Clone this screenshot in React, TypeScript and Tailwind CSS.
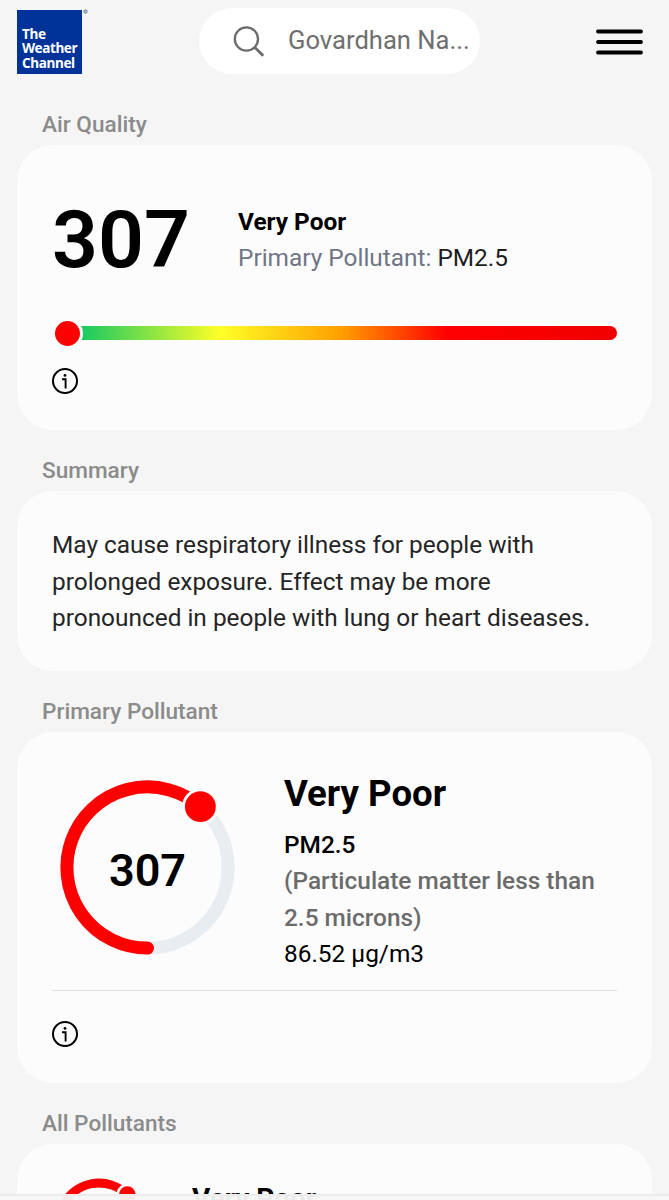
import type { ReactNode } from 'react';

interface GaugeProps {
  size: number;
  stroke: number;
  radius: number;
  dot: number;
  gap: number;
  angle: number;
}

const polar = (center: number, radius: number, angle: number) => {
  const rad = (angle * Math.PI) / 180;
  return { x: center + radius * Math.sin(rad), y: center - radius * Math.cos(rad) };
};

function Gauge({ size, stroke, radius, dot, gap, angle }: GaugeProps) {
  const c = size / 2;
  const end = polar(c, radius, angle);

  return (
    <svg width={size} height={size} viewBox={`0 0 ${size} ${size}`} className="block overflow-visible">
      <circle cx={c} cy={c} r={radius} fill="none" stroke="#e7edf1" strokeWidth={stroke} />
      <path
        d={`M${c} ${c + radius} A${radius} ${radius} 0 1 1 ${end.x} ${end.y}`}
        fill="none"
        stroke="#ff0000"
        strokeWidth={stroke}
        strokeLinecap="round"
      />
      <circle cx={end.x} cy={end.y} r={dot + gap} fill="#fcfcfc" />
      <circle cx={end.x} cy={end.y} r={dot} fill="#ff0000" />
    </svg>
  );
}

function InfoIcon() {
  return (
    <svg width="26" height="26" viewBox="0 0 26 26" fill="none" className="block">
      <circle cx="13" cy="13" r="12" stroke="#000" strokeWidth="2" />
      <circle cx="13" cy="7.4" r="1.4" fill="#000" />
      <path d="M10 11.2h3.6v9.4" stroke="#000" strokeWidth="1.9" />
    </svg>
  );
}

function Section({ title, className, children }: { title: string; className: string; children: ReactNode }) {
  return (
    <section>
      <h2 className="flex h-[61px] items-end pb-[5px] pl-[25px] text-[22.6px] leading-[30px] font-medium text-[#8b8b8b]">
        {title}
      </h2>
      <div className={`rounded-[36px] bg-[#fcfcfc] px-[35px] ${className}`}>{children}</div>
    </section>
  );
}

function Header() {
  return (
    <header className="flex h-[84px] items-start pl-[17px] pr-[26px] pt-2">
      <div className="relative mt-[2px] flex h-[64px] w-[65px] flex-col justify-end bg-[#003399] pb-[3px] pl-[5px] font-['Noto_Sans'] text-[13.6px] leading-[14.8px] font-bold tracking-[-0.4px] text-white">
        <p>
          The
          <br />
          Weather
          <br />
          Channel
        </p>
        <svg width="5" height="5" viewBox="0 0 5 5" className="absolute -right-[6px] -top-px">
          <circle cx="2.5" cy="2.5" r="1.7" fill="#b3bccb" stroke="#71829d" strokeWidth="1" />
        </svg>
      </div>
      <div className="ml-[117px] flex h-[66px] w-[281px] items-center rounded-[33px] bg-white pl-[34px]">
        <svg width="31" height="31" viewBox="0 0 31 31" fill="none" stroke="#6b6b6b" strokeWidth="2.3">
          <circle cx="13.4" cy="13" r="11.6" />
          <path d="M21.6 21.2l8.6 8.6" strokeWidth="2.8" />
        </svg>
        <span className="ml-[24px] -mt-[2px] text-[25.6px] leading-[30px] text-[#6f6f6f]">Govardhan Na...</span>
      </div>
      <svg width="47" height="26" viewBox="0 0 47 26" className="ml-auto mt-[21px]" stroke="#000" strokeWidth="3.8" strokeLinecap="round">
        <path d="M2 2.5h43M2 13h43M2 23.5h43" />
      </svg>
    </header>
  );
}

export default function App() {
  return (
    <div className="relative h-[1200px] w-[669px] overflow-hidden bg-[#f5f5f5] font-[Roboto,sans-serif] text-black">
      <Header />

      <main className="px-[17px]">
        {/* Overall index */}
        <Section title="Air Quality" className="h-[285px] pt-[47px]">
          <div className="flex">
            <div className="w-[186px] text-[80.5px] leading-[96px] font-semibold">307</div>
            <div className="pt-[12px] text-[24.4px] leading-[36.4px]">
              <p className="font-bold">Very Poor</p>
              <p className="text-[#6f7585]">
                Primary Pollutant: <span className="text-[#1e1e1e]">PM2.5</span>
              </p>
            </div>
          </div>
          <div className="mt-[31px] flex h-[28px] items-center rounded-full">
            <div className="z-10 -mr-[16px] size-[31px] shrink-0 rounded-full border-[3px] border-[#fcfcfc] bg-[#ff0000]" />
            <div className="h-[14px] flex-1 rounded-r-full bg-[linear-gradient(90deg,#00c466_0%,#ffff26_28%,#ff9e00_50%,#ff0000_69%,#f00000_100%)]" />
          </div>
          <div className="mt-[21px]">
            <InfoIcon />
          </div>
        </Section>

        <Section title="Summary" className="h-[180px] pt-[36px]">
          <p className="text-[24.4px] leading-[36.7px] text-[#252525]">
            May cause respiratory illness for people with
            <br />
            prolonged exposure. Effect may be more
            <br />
            pronounced in people with lung or heart diseases.
          </p>
        </Section>

        <Section title="Primary Pollutant" className="h-[351px] pt-[42px]">
          <div className="flex h-[217px] border-b-[1.5px] border-[#dedede]">
            <div className="relative mt-[6px] ml-[8px] h-[175px] w-[175px]">
              <Gauge size={175} radius={80.6} stroke={13} dot={15.4} gap={3} angle={41} />
              <span className="absolute inset-x-0 top-[65px] text-center text-[45px] leading-[52px] font-semibold">307</span>
            </div>
            <div className="ml-[49px] text-[24.4px] leading-[36.4px] whitespace-nowrap">
              <h3 className="text-[36.6px] leading-[40px] font-bold">Very Poor</h3>
              <p className="mt-[13px] font-medium">PM2.5</p>
              <p className="font-medium text-[#6b6b6b]">
                (Particulate matter less than
                <br />
                2.5 microns)
              </p>
              <p className="-mt-[0.5px]">86.52 µg/m3</p>
            </div>
          </div>
          <div className="mt-[30px]">
            <InfoIcon />
          </div>
        </Section>

        <Section title="All Pollutants" className="h-[351px] pt-[35px]">
          <div className="flex">
            <div className="ml-[3px] w-[88px]">
              <Gauge size={88} radius={40} stroke={8.8} dot={8.4} gap={2.5} angle={45} />
            </div>
            <h3 className="ml-[49px] pt-[4px] text-[28px] leading-[32px] font-bold">Very Poor</h3>
          </div>
        </Section>
      </main>

      {/* Bottom sheet edge */}
      <div className="absolute inset-x-0 bottom-0 h-[6px] border-t-2 border-[#ebebeb] bg-[#f7f7f7]/95" />
    </div>
  );
}
